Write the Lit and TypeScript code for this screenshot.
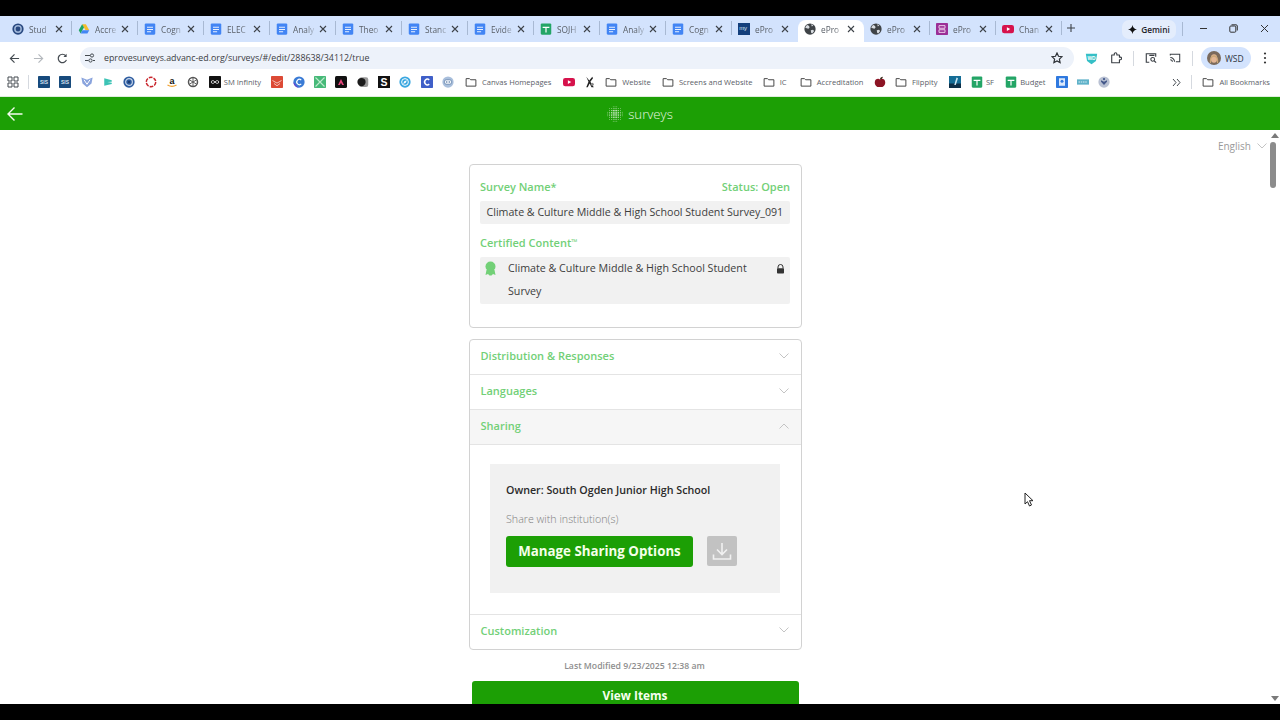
import { LitElement, html, svg, css } from "lit";
import { customElement } from "lit/decorators.js";

const icons: Record<string, () => unknown> = {
  sisc: () => html`<svg class="ico" width="12" height="12" viewBox="0 0 16 16"><circle cx="8" cy="8" r="7.500" fill="#27477f"/><circle cx="8" cy="8" r="5.200" fill="#9fb6d8"/><circle cx="8" cy="8" r="3.200" fill="#27477f"/></svg>`,
  drive: () => html`<svg class="ico" width="12" height="12" viewBox="0 0 16 16"><path d="M5.500 1.500h5L15 9.500h-5z" fill="#f5bb2c"/><path d="M5.500 1.500 1 9.500l2.500 4.500L8 5.800z" fill="#1fa463"/><path d="M3.500 14h9L15 9.500H6z" fill="#4285f4"/></svg>`,
  doc: () => html`<svg class="ico" width="12" height="12" viewBox="0 0 16 16"><rect x="1" y="0.500" width="14" height="15" rx="1.500" fill="#4285f4"/><path d="M4 5h8v1.300H4zM4 8h8v1.300H4zM4 11h5.500v1.300H4z" fill="#e8f0fe"/></svg>`,
  sheet: () => html`<svg class="ico" width="12" height="12" viewBox="0 0 16 16"><rect x="1" y="0.500" width="14" height="15" rx="1.500" fill="#23a566"/><path d="M3.500 5h9v1.500H8.800v6H7.200v-6H3.500z" fill="#fff"/></svg>`,
  my: () => html`<svg class="ico" width="12" height="12" viewBox="0 0 16 16"><rect width="16" height="16" fill="#143f7c"/><text x="1.500" y="9" font-size="8" fill="#dfe8f5" font-family="Liberation Sans, sans-serif">my</text></svg>`,
  globe: () => html`<svg class="ico" width="12" height="12" viewBox="0 0 16 16"><circle cx="8" cy="8" r="7.500" fill="#3f4347"/><path d="M4 2.500c2 .5 3 1.500 3.500 3L6 7.500 3.500 7 1.500 6zM9 9.500l3-.5 1.500 1.500-2.500 3.500-1.500-1zM9.500 1.500l3 1.500-2 1.500z" fill="#d9dde2"/></svg>`,
  purple: () => html`<svg class="ico" width="12" height="12" viewBox="0 0 16 16"><rect width="16" height="16" rx="1" fill="#9b2f97"/><path d="M4 3.500h8v3.500H4zM4 9h8v3.500H4z" fill="none" stroke="#f3d9f2" stroke-width="1.200"/></svg>`,
  yt: () => html`<svg class="ico" width="12" height="12" viewBox="0 0 16 16"><rect y="2.500" width="16" height="11" rx="3" fill="#d6124c"/><path d="M6.500 5.500v5L11 8z" fill="#fff"/></svg>`,
  sis: () => html`<svg class="ico" width="12" height="12" viewBox="0 0 16 16"><rect width="16" height="16" rx="1" fill="#174a7c"/><text x="8" y="10.500" text-anchor="middle" font-size="6.500" font-weight="700" fill="#dbe6f2" font-family="Liberation Sans, sans-serif">SIS</text></svg>`,
  v: () => html`<svg class="ico" width="12" height="12" viewBox="0 0 16 16"><path d="M.5 2 8 5l7.500-3-1.500 8-6 5-6-5z" fill="#8aa4dd"/><path d="M4 5l4 6 4-6" fill="none" stroke="#fff" stroke-width="1.300"/></svg>`,
  wave: () => html`<svg class="ico" width="12" height="12" viewBox="0 0 16 16"><path d="M3 3l10 2.500v2L7 8l6 1v1.500L3 13z" fill="#3cc3b5"/></svg>`,
  cring: () => html`<svg class="ico" width="12" height="12" viewBox="0 0 16 16"><circle cx="8" cy="8" r="7.500" fill="#2f5da0"/><circle cx="8" cy="8" r="4.500" fill="none" stroke="#c9d7ea" stroke-width="1.500"/><circle cx="8" cy="8" r="1.800" fill="#1c3d70"/></svg>`,
  redring: () => html`<svg class="ico" width="12" height="12" viewBox="0 0 16 16"><circle cx="8" cy="8" r="6.300" fill="none" stroke="#c8252c" stroke-width="2" stroke-dasharray="5 1.500"/></svg>`,
  amazon: () => html`<svg class="ico" width="12" height="12" viewBox="0 0 16 16"><text x="8" y="10" text-anchor="middle" font-size="12" font-weight="700" fill="#111" font-family="Liberation Sans, sans-serif">a</text><path d="M2 12c4 2.500 8 2.500 12 0" fill="none" stroke="#f0a030" stroke-width="1.500"/></svg>`,
  gpt: () => html`<svg class="ico" width="12" height="12" viewBox="0 0 16 16"><circle cx="8" cy="8" r="6" fill="none" stroke="#555" stroke-width="2"/><path d="M3 5l10 6M13 5L3 11M8 2v12" stroke="#555" stroke-width="1.200"/></svg>`,
  inf: () => html`<svg class="ico" width="12" height="12" viewBox="0 0 16 16"><rect width="16" height="16" rx="1" fill="#111"/><path d="M8 8C6.500 5.500 3 5.500 3 8s3.500 2.500 5 0 5-2.500 5 0-3.500 2.500-5 0z" fill="none" stroke="#fff" stroke-width="1"/></svg>`,
  redbook: () => html`<svg class="ico" width="12" height="12" viewBox="0 0 16 16"><rect width="16" height="16" rx="1" fill="#dc4a36"/><path d="M2 6l6 3.500L14 6M4 10l4 3 4-3" fill="none" stroke="#f6c9bf" stroke-width="1.300"/></svg>`,
  canva: () => html`<svg class="ico" width="12" height="12" viewBox="0 0 16 16"><circle cx="8" cy="8" r="7.500" fill="#3a7bd5"/><path d="M.5 8A7.500 7.500 0 0 0 8 15.500C4 13.500 3 10.500.5 8z" fill="#6a3bd0"/><path d="M11 5.500a3.500 3.500 0 1 0 0 5" fill="none" stroke="#fff" stroke-width="1.600"/></svg>`,
  greenx: () => html`<svg class="ico" width="12" height="12" viewBox="0 0 16 16"><rect width="16" height="16" rx="1" fill="#46b978"/><path d="M2 2l12 12M14 2 2 14" stroke="#bfe9cf" stroke-width="1.500"/></svg>`,
  adobe: () => html`<svg class="ico" width="12" height="12" viewBox="0 0 16 16"><rect width="16" height="16" rx="2" fill="#111"/><path d="M8 4l4 8H9.500L8 9l-1.500 3H4z" fill="#e8467c"/></svg>`,
  moon: () => html`<svg class="ico" width="12" height="12" viewBox="0 0 16 16"><rect x="3" y="1.500" width="12" height="13" rx="3" fill="#9a9a9a"/><circle cx="6" cy="8" r="5.500" fill="#1c1c1c"/></svg>`,
  s: () => html`<svg class="ico" width="12" height="12" viewBox="0 0 16 16"><rect width="16" height="16" fill="#111"/><text x="8" y="13" text-anchor="middle" font-size="14" font-weight="700" fill="#fff" font-family="Liberation Sans, sans-serif">S</text></svg>`,
  compass: () => html`<svg class="ico" width="12" height="12" viewBox="0 0 16 16"><circle cx="8" cy="8" r="7.500" fill="#3aa7e0"/><circle cx="8" cy="8" r="4.500" fill="none" stroke="#fff" stroke-width="1.300"/><path d="M10.500 5.500 9 9 5.500 10.500 7 7z" fill="#fff"/></svg>`,
  cblue: () => html`<svg class="ico" width="12" height="12" viewBox="0 0 16 16"><rect width="16" height="16" rx="1" fill="#3f5fc8"/><path d="M11 5.200a3.700 3.700 0 1 0 0 5.600" fill="none" stroke="#fff" stroke-width="2"/></svg>`,
  chat: () => html`<svg class="ico" width="12" height="12" viewBox="0 0 16 16"><circle cx="8" cy="8" r="7.500" fill="#a9bfdc"/><rect x="3" y="5" width="10" height="6" rx="3" fill="#eef3f9" stroke="#4a6d9a" stroke-width=".8"/><circle cx="6.300" cy="8" r=".9" fill="#4a6d9a"/><circle cx="9.700" cy="8" r=".9" fill="#4a6d9a"/></svg>`,
  folder: () => html`<svg class="ico" width="12" height="12" viewBox="0 0 16 16"><path d="M1.500 3.500H6L7.500 5h7v8.500h-13z" fill="none" stroke="#444" stroke-width="1.300" stroke-linejoin="round"/></svg>`,
  xman: () => html`<svg class="ico" width="12" height="12" viewBox="0 0 16 16"><path d="M3 1l4 5 4-5 1 2-3.500 4.500L13 15h-3L7.500 10 5 15H3l3-7.500z" fill="#222"/><circle cx="11" cy="11" r="2" fill="#888"/></svg>`,
  apple: () => html`<svg class="ico" width="12" height="12" viewBox="0 0 16 16"><path d="M8 4.500C10 3 15 3.500 15 8.500S10.500 15.500 8 14.500C5.500 15.500 1 13.500 1 8.500S6 3 8 4.500z" fill="#8c1424"/><path d="M8 4.500c0-2 1.500-3.500 4-3.500-.5 2-2 3.500-4 3.500z" fill="#3a2a1a"/></svg>`,
  photo: () => html`<svg class="ico" width="12" height="12" viewBox="0 0 16 16"><rect width="16" height="16" fill="#156d96"/><rect y="10" width="16" height="6" fill="#0d2f48"/><path d="M10 2l2 1-3 9H7z" fill="#cde6f2"/></svg>`,
  bluebox: () => html`<svg class="ico" width="12" height="12" viewBox="0 0 16 16"><rect width="16" height="16" rx="1" fill="#2f79df"/><rect x="4" y="3" width="8" height="10" fill="#dbe9fb"/><circle cx="8" cy="7" r="2" fill="#2f79df"/></svg>`,
  strip: () => html`<svg class="ico" width="12" height="12" viewBox="0 0 16 16"><rect y="4.500" width="16" height="7" fill="#5fb2c9"/><path d="M2 8h12" stroke="#d8eef5" stroke-width="1.500" stroke-dasharray="2 1"/></svg>`,
  seal: () => html`<svg class="ico" width="12" height="12" viewBox="0 0 16 16"><circle cx="8" cy="8" r="7.500" fill="#b9c1d3"/><path d="M4 5.500l4 2 4-2v2l-4 4.500-4-4.500z" fill="#44588a"/><circle cx="8" cy="4" r="1.500" fill="#44588a"/></svg>`,
};

const tabs: [string, string][] = [
  ["sisc", "Stud"], ["drive", "Accre"], ["doc", "Cogn"], ["doc", "ELEC"],
  ["doc", "Analy"], ["doc", "Theo"], ["doc", "Stanc"], ["doc", "Evide"],
  ["sheet", "SOJH"], ["doc", "Analy"], ["doc", "Cogn"], ["my", "ePro"],
  ["globe", "ePro"], ["globe", "ePro"], ["purple", "ePro"], ["yt", "Chan"],
];

const marks: [string, string?, string?][] = [
  ["sis"], ["sis"], ["v"], ["wave"], ["cring"], ["redring"], ["amazon"], ["gpt"],
  ["inf", "SM Infinity"], ["redbook"], ["canva"], ["greenx"], ["adobe"], ["moon"], ["s"],
  ["compass"], ["cblue"], ["chat"], ["folder", "Canvas Homepages", "first m1"], ["yt"], ["xman"],
  ["folder", "Website", "m1"], ["folder", "Screens and Website"], ["folder", "IC", "m3"],
  ["folder", "Accreditation"], ["apple"], ["folder", "Flippity", "m1"], ["photo"], ["sheet", "SF", "ml1 m1"],
  ["sheet", "Budget"], ["bluebox"], ["strip"], ["seal"],
];

const chevron = (up = false) => html`<svg class="chev" width="10" height="6" viewBox="0 0 10 6"><path d=${up ? "M.5 5.500 5 1l4.500 4.500" : "M.5.500 5 5 9.500.5"} fill="none" stroke="#c4c4c4" stroke-width="1"/></svg>`;

function logoDots() {
  const dots: unknown[] = [];
  for (let i = 0; i < 9; i++) {
    for (let j = 0; j < 9; j++) {
      const x = i * 1.8 - 7.2, y = j * 1.8 - 7.2;
      const d = Math.hypot(x, y);
      if (d > 8) continue;
      const r = 0.72 - d * 0.045;
      dots.push(svg`<circle cx=${x + 8} cy=${y + 8} r=${r} fill="#ffffff"/>`);
    }
  }
  return dots;
}

@customElement("app-root")
export class AppRoot extends LitElement {
  static styles = css`
    :host { display: flex; flex-direction: column; width: 1280px; height: 720px; overflow: hidden; background: #000; position: relative; font-family: "Open Sans", "Noto Sans", sans-serif; }
    .ico { flex: none; display: block; }
    .bar { height: 16px; flex: none; background: #000; }

    .strip { height: 26px; flex: none; background: #d3e3fd; display: flex; padding-left: 6px; }
    .tab { width: 66px; box-sizing: border-box; flex: none; height: 22px; margin-top: 4px; display: flex; align-items: center; padding: 0 0 4px 6px; position: relative; }
    .tab.sep::after { content: ""; position: absolute; right: 0; top: 1px; height: 14px; width: 1px; background: #a8b9d3; }
    .tab.active { background: #fff; border-radius: 8px 8px 0 0; }
    .tt { width: 24px; margin-left: 5px; font-size: 8.300px; color: #5a6068; white-space: nowrap; -webkit-mask-image: linear-gradient(90deg, #000 55%, transparent 100%); mask-image: linear-gradient(90deg, #000 55%, transparent 100%); }
    .x { margin-left: 2px; }
    .plus { width: 22px; margin-left: -2px; display: flex; align-items: center; justify-content: center; margin-bottom: 2px; }
    .spring { flex: 1; }
    .gem { margin-top: 4px; height: 19px; width: 54px; border-radius: 7px; background: #e4edfc; display: flex; align-items: center; justify-content: center; gap: 4px; font-size: 8.300px; font-weight: 600; color: #1f2329; }
    .vsep { width: 1px; height: 14px; background: #a8b9d3; margin: 6px 5px 0 6px; flex: none; }
    .win { width: 30.700px; display: flex; align-items: center; justify-content: center; flex: none; margin-bottom: 1px; }

    .tools { height: 28px; flex: none; background: #fff; display: flex; align-items: center; padding: 4px 3px 0 2px; box-sizing: border-box; }
    .tb { width: 24px; flex: none; display: flex; align-items: center; justify-content: center; }
    .tb.ext { margin-left: 1px; }
    .omni { flex: 1; margin: 0 5px 0 6px; height: 22px; border-radius: 11px; background: #edf2fa; display: flex; align-items: center; padding: 0 11px 0 4px; box-sizing: border-box; font-size: 8.830px; color: #3c4043; }
    .url { margin-left: 8px; flex: 1; white-space: nowrap; }
    .tsep { width: 1px; height: 15px; background: #d5d9df; margin: 0 5px; flex: none; }
    .chip { width: 50px; height: 22px; border-radius: 11px; background: #d3e3fd; flex: none; display: flex; align-items: center; padding-left: 6px; box-sizing: border-box; gap: 4px; font-size: 8.500px; color: #30363d; margin: 0 2px 0 3px; }

    .marks { height: 26px; flex: none; background: #fff; display: flex; align-items: center; padding: 0 10px 2px 7px; box-sizing: border-box; }
    .msep { width: 1px; height: 14px; background: #d5d9df; flex: none; }
    .msep.a { margin-left: 9px; }
    .msep.b { margin: 0 10px; }
    .mlist { display: flex; align-items: center; gap: 9.350px; margin-left: 9px; }
    .mk { display: flex; align-items: center; gap: 3px; font-size: 7.600px; color: #5a6068; white-space: nowrap; }
    .mk.named { margin-right: 0.800px; }
    .mk.fold { gap: 5px; }
    .mk.first { margin-left: 1.600px; }
    .mk.m1 { margin-right: 1.800px; }
    .mk.m3 { margin-right: 3.800px; }
    .mk.ml1 { margin-left: 1px; }
    .mright { margin-left: auto; display: flex; align-items: center; font-size: 7.600px; color: #5a6068; }
    .mright span { margin-left: 5px; }

    .head { height: 34px; flex: none; background: #1c9f05; border-top: 1px solid #dfeedd; box-sizing: border-box; display: flex; align-items: center; padding-left: 7px; }
    .center { flex: 1; display: flex; justify-content: center; align-items: center; gap: 5px; margin-left: -23px; font-size: 13.200px; color: #e8f6e2; font-weight: 300; }

    .view { flex: 1; min-height: 0; background: #fff; display: flex; overflow: hidden; }
    .page { flex: 1; min-width: 0; overflow: hidden; padding-left: 2px; }
    .lang { display: flex; justify-content: flex-end; align-items: center; height: 16px; padding-top: 8px; padding-right: 2px; gap: 6px; font-size: 10px; color: #9a9a9a; }
    .col { width: 333px; margin: 10px auto 0; }
    .scroll { width: 11px; flex: none; background: #fff; display: flex; flex-direction: column; align-items: center; justify-content: space-between; padding: 3px 0; box-sizing: border-box; }
    .thumb { width: 6px; height: 46px; background: #8c8c8c; border-radius: 3px; margin: 4px auto auto 1px; }

    .card { border: 1px solid #d2d2d2; border-radius: 4px; background: #fff; box-sizing: border-box; }
    .c1 { height: 164px; padding: 14px 11px 0 10px; }
    .lab { color: #72d077; font-size: 11px; font-weight: 600; line-height: 15px; }
    .row { display: flex; justify-content: space-between; }
    .field { margin-top: 7px; height: 23px; background: #f1f1f1; border-radius: 2px; font-size: 10.650px; color: #3d3d3d; display: flex; align-items: center; padding: 0 0 2px 6.500px; box-sizing: border-box; white-space: nowrap; }
    .lab.cc { margin-top: 10px; }
    .tm { font-size: 8px; vertical-align: 2px; }
    .certbox { margin-top: 7px; height: 46.500px; background: #f1f1f1; border-radius: 2px; display: flex; padding: 0 5px 0 3.500px; font-size: 10.700px; line-height: 23.200px; color: #3d3d3d; }
    .certtext { width: 246px; margin-left: 11.500px; }
    .medal { margin-top: 4px; flex: none; }
    .lock { margin: 7px 0 0 auto; flex: none; }

    .acc { margin-top: 11px; height: 311px; display: flex; flex-direction: column; }
    .ah { height: 35px; flex: none; box-sizing: border-box; border-bottom: 1px solid #e4e4e4; display: flex; align-items: center; justify-content: space-between; padding: 0 12px 3px 10.500px; color: #72d077; font-size: 11px; font-weight: 600; }
    .ah.open { background: #f6f6f6; }
    .ah.last { border-bottom: 0; padding-bottom: 5px; }
    .share { flex: none; height: 170px; box-sizing: border-box; border-bottom: 1px solid #e4e4e4; padding: 19px 21px 0 20px; }
    .inner { height: 129px; background: #f1f1f1; padding: 17.500px 16px 0; box-sizing: border-box; }
    .owner { font-size: 10.700px; font-weight: 600; color: #2a2a2a; line-height: 17px; }
    .with { margin-top: 12px; font-size: 10.700px; font-weight: 300; color: #7e7e7e; line-height: 17px; }
    .acts { display: flex; align-items: center; margin-top: 8px; gap: 14px; }
    .manage { width: 187px; height: 31px; border-radius: 3px; background: #1c9f05; color: #f4ffe8; border: 0; padding: 0; font: 700 13.300px "Open Sans", sans-serif; display: flex; align-items: center; justify-content: center; }
    .dl { width: 30px; height: 30px; background: #c2c2c2; border-radius: 2px; display: flex; align-items: center; justify-content: center; }
    .mod { text-align: center; font-size: 8.700px; font-weight: 600; color: #8e8e8e; margin-top: 10px; line-height: 12px; padding-right: 2px; }
    .viewb { margin: 9px 3px 0 3px; height: 34px; border-radius: 3px 3px 0 0; background: #1c9f05; color: #f6ffee; font-size: 11.800px; font-weight: 700; display: flex; justify-content: center; padding: 5.500px 1px 0 0; box-sizing: border-box; }
    .cursor { position: absolute; left: 1024px; top: 492px; }
  `;

  render() {
    return html`
      <div class="bar"></div>
      <div class="strip">
        ${tabs.map(([k, t], i) => html`
          <div class="tab ${i === 12 ? "active" : ""} ${i !== 11 && i !== 12 ? "sep" : ""}">
            ${icons[k]()}<span class="tt">${t}</span>
            <svg class="x ico" width="8" height="8" viewBox="0 0 8 8"><path d="M1 1l6 6M7 1 1 7" stroke="#3d4248" stroke-width="1.100"/></svg>
          </div>`)}
        <div class="plus"><svg width="10" height="10" viewBox="0 0 10 10"><path d="M5 1v8M1 5h8" stroke="#3d4248" stroke-width="1.100"/></svg></div>
        <div class="spring"></div>
        <div class="gem"><svg width="9" height="9" viewBox="0 0 10 10"><path d="M5 0c.5 3 2 4.500 5 5-3 .5-4.500 2-5 5-.5-3-2-4.500-5-5 3-.5 4.500-2 5-5z" fill="#111"/></svg>Gemini</div>
        <div class="vsep"></div>
        <div class="win"><svg width="9" height="9" viewBox="0 0 9 9"><path d="M1 4.500h7" stroke="#333" stroke-width="1"/></svg></div>
        <div class="win"><svg width="9" height="9" viewBox="0 0 9 9"><rect x=".8" y="2" width="6" height="6.200" rx="1" fill="none" stroke="#333" stroke-width="1"/><path d="M2.500 .8H7A1.300 1.300 0 0 1 8.300 2v4.500" fill="none" stroke="#333" stroke-width="1"/></svg></div>
        <div class="win"><svg width="9" height="9" viewBox="0 0 9 9"><path d="M1 1l7 7M8 1 1 8" stroke="#333" stroke-width="1"/></svg></div>
      </div>

      <div class="tools">
        <div class="tb"><svg width="11" height="11" viewBox="0 0 12 12"><path d="M11 6H1.500M6 1.500 1.500 6 6 10.500" fill="none" stroke="#444a50" stroke-width="1.300"/></svg></div>
        <div class="tb"><svg width="11" height="11" viewBox="0 0 12 12"><path d="M1 6h9.500M6 1.500 10.500 6 6 10.500" fill="none" stroke="#b4b8bd" stroke-width="1.300"/></svg></div>
        <div class="tb"><svg width="11" height="11" viewBox="0 0 12 12"><path d="M10.300 7.500A4.600 4.600 0 1 1 9.500 3" fill="none" stroke="#444a50" stroke-width="1.300"/><path d="M10.500 .8v3.500H7z" fill="#444a50"/></svg></div>
        <div class="omni">
          <svg class="ico" width="12" height="12" viewBox="0 0 12 12"><path d="M1 3.500h5M9 8.500h2M1 8.500h3.500" stroke="#444a50" stroke-width="1.100"/><circle cx="8" cy="3.500" r="1.600" fill="none" stroke="#444a50"/><circle cx="6.500" cy="8.500" r="1.600" fill="none" stroke="#444a50"/></svg>
          <span class="url">eprovesurveys.advanc-ed.org/surveys/#/edit/288638/34112/true</span>
          <svg class="ico" width="12" height="12" viewBox="0 0 12 12"><path d="M6 1l1.500 3.300 3.500.4-2.600 2.400.7 3.500L6 8.900l-3.100 1.700.7-3.500L1 4.700l3.500-.4z" fill="none" stroke="#2d3136" stroke-width="1.200"/></svg>
        </div>
        <div class="tb"><svg width="13" height="13" viewBox="0 0 16 16"><path d="M1 2h14l-1.500 9L8 15l-5.500-4z" fill="#35bfc6"/><text x="8" y="9.500" text-anchor="middle" font-size="6" font-weight="700" fill="#fff" font-family="Liberation Sans, sans-serif">WD</text></svg></div>
        <div class="tb ext"><svg width="12" height="12" viewBox="0 0 14 14"><path d="M2 3.500h3V2.300a1.500 1.500 0 0 1 3 0V3.500h3V6h1a1.500 1.500 0 0 1 0 3h-1v3.500H2z" fill="none" stroke="#3a3f45" stroke-width="1.300" stroke-linejoin="round"/></svg></div>
        <div class="tsep"></div>
        <div class="tb"><svg width="12" height="12" viewBox="0 0 14 14"><path d="M5 12H1.500V2h11v3.500M5 4h6" fill="none" stroke="#3a3f45" stroke-width="1.300"/><circle cx="9" cy="8.500" r="2.200" fill="none" stroke="#3a3f45" stroke-width="1.200"/><path d="M10.600 10.200 13 12.500" stroke="#3a3f45" stroke-width="1.300"/></svg></div>
        <div class="tb"><svg width="12" height="12" viewBox="0 0 14 14"><path d="M1.500 4V2.500h11v9H8M1.500 6.500a5 5 0 0 1 5 5M1.500 9a2.500 2.500 0 0 1 2.500 2.500" fill="none" stroke="#3a3f45" stroke-width="1.200"/></svg></div>
        <div class="tsep"></div>
        <div class="chip">
          <svg class="ico" width="14" height="14" viewBox="0 0 14 14"><circle cx="7" cy="7" r="7" fill="#7a6a5c"/><ellipse cx="7" cy="7.500" rx="3.200" ry="4.200" fill="#e2b594"/><path d="M3.500 12c-.5-4 .5-7 3.500-7s4 3 3.500 7" fill="none" stroke="#c9a676" stroke-width="1.300"/></svg>
          WSD
        </div>
        <div class="tb"><svg width="4" height="12" viewBox="0 0 4 12"><circle cx="2" cy="1.500" r="1.100" fill="#333"/><circle cx="2" cy="6" r="1.100" fill="#333"/><circle cx="2" cy="10.500" r="1.100" fill="#333"/></svg></div>
      </div>

      <div class="marks">
        <svg class="ico" width="12" height="12" viewBox="0 0 12 12"><path d="M1 1h4v4H1zM7 1h4v4H7zM1 7h4v4H1zM7 7h4v4H7z" fill="none" stroke="#444a50" stroke-width="1"/></svg>
        <div class="msep a"></div>
        <div class="mlist">
          ${marks.map(([k, t, c]) => html`<div class="mk ${t ? "named" : ""} ${k === "folder" ? "fold" : ""} ${c ?? ""}">${icons[k]()}${t ? html`<span>${t}</span>` : ""}</div>`)}
        </div>
        <div class="mright">
          <svg width="9" height="9" viewBox="0 0 9 9"><path d="M1 1l3 3.500-3 3.500M5 1l3 3.500-3 3.500" fill="none" stroke="#444a50" stroke-width="1"/></svg>
          <div class="msep b"></div>
          ${icons.folder()}<span>All Bookmarks</span>
        </div>
      </div>

      <div class="head">
        <svg width="16" height="16" viewBox="0 0 16 16"><path d="M15.500 8H1M7.500 1.500 1 8l6.500 6.500" fill="none" stroke="#f4fbef" stroke-width="1.400"/></svg>
        <div class="center">
          <svg width="16" height="16" viewBox="0 0 16 16">${logoDots()}</svg>
          <span>surveys</span>
        </div>
      </div>

      <div class="view">
        <div class="page">
          <div class="lang">English ${chevron()}</div>
          <div class="col">
            <div class="card c1">
              <div class="row lab"><span>Survey Name*</span><span>Status: Open</span></div>
              <div class="field">Climate &amp; Culture Middle &amp; High School Student Survey_091</div>
              <div class="lab cc">Certified Content<span class="tm">™</span></div>
              <div class="certbox">
                <svg class="medal" width="13" height="15" viewBox="0 0 13 15"><circle cx="6.500" cy="5.500" r="5" fill="#72d077"/><path d="M2.500 9 1.500 14l2.500-1 1.500 1.500h2L9 13l2.500 1-1-5z" fill="#72d077"/></svg>
                <div class="certtext">Climate &amp; Culture Middle &amp; High School Student Survey</div>
                <svg class="lock" width="9" height="10" viewBox="0 0 9 10"><path d="M2 4.500V3a2.500 2.500 0 0 1 5 0v1.500" fill="none" stroke="#333" stroke-width="1"/><rect x="1" y="4.300" width="7" height="5.200" rx=".8" fill="#333"/></svg>
              </div>
            </div>
            <div class="card acc">
              <div class="ah"><span>Distribution &amp; Responses</span>${chevron()}</div>
              <div class="ah"><span>Languages</span>${chevron()}</div>
              <div class="ah open"><span>Sharing</span>${chevron(true)}</div>
              <div class="share">
                <div class="inner">
                  <div class="owner">Owner: South Ogden Junior High School</div>
                  <div class="with">Share with institution(s)</div>
                  <div class="acts">
                    <button class="manage">Manage Sharing Options</button>
                    <div class="dl"><svg width="20" height="20" viewBox="0 0 20 20"><path d="M10 2v11M5 8.500l5 5 5-5M1.500 13.500v4.500h17v-4.500" fill="none" stroke="#f1f1f1" stroke-width="1.600"/></svg></div>
                  </div>
                </div>
              </div>
              <div class="ah last"><span>Customization</span>${chevron()}</div>
            </div>
            <div class="mod">Last Modified 9/23/2025 12:38 am</div>
            <div class="viewb">View Items</div>
          </div>
        </div>
        <div class="scroll">
          <svg width="8" height="5" viewBox="0 0 8 5"><path d="M4 0l4 5H0z" fill="#7a7a7a"/></svg>
          <div class="thumb"></div>
          <svg width="8" height="5" viewBox="0 0 8 5"><path d="M4 5 0 0h8z" fill="#7a7a7a"/></svg>
        </div>
      </div>
      <div class="bar"></div>
      <svg class="cursor" width="10" height="15" viewBox="0 0 10 15"><path d="M1 1v11l2.500-2.300L5.500 14l2-1-2-4.300H9z" fill="#fff" stroke="#222" stroke-width="1"/></svg>
    `;
  }
}
